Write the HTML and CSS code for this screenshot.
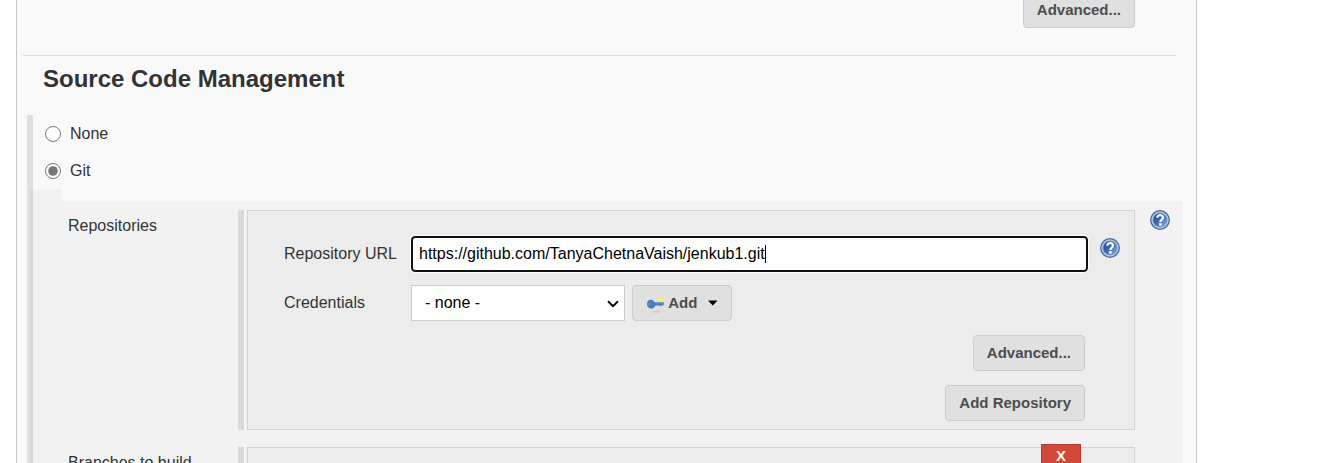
FILE: index.html
```html
<!DOCTYPE html>
<html lang="en">
<head>
<meta charset="utf-8">
<title>Source Code Management</title>
<link rel="stylesheet" href="styles.css">
</head>
<body>
<svg class="defs" aria-hidden="true">
  <defs>
    <linearGradient id="orb" x1="0" y1="0" x2="1" y2="1">
      <stop offset="0" stop-color="#16438c"/>
      <stop offset="0.45" stop-color="#3a66a8"/>
      <stop offset="1" stop-color="#8fb0da"/>
    </linearGradient>
    <symbol id="help" viewBox="0 0 20 20">
      <circle cx="10" cy="10" r="9.3" fill="#b4c8e4" stroke="#46699f" stroke-width="1.3"/>
      <circle cx="10" cy="10" r="6.9" fill="url(#orb)" stroke="#6d8dbd" stroke-width="0.6"/>
      <path d="M7.2 7.8C7.1 4.2 13.1 4.2 13 7.6C13 9.6 10.4 9.5 10.4 11.9" fill="none" stroke="#fff" stroke-width="2.2"/>
      <rect x="9.1" y="13.2" width="2.5" height="2.4" fill="#fff"/>
    </symbol>
  </defs>
</svg>
<main class="panel">
  <div class="top-actions"><button class="btn" type="button">Advanced...</button></div>
  <h2 class="heading">Source Code Management</h2>
  <section class="scm">
    <label class="choice"><input type="radio" name="scm">None</label>
    <label class="choice"><input type="radio" name="scm" checked>Git</label>
    <div class="git">
      <div class="git-tab"></div>
      <div class="git-body">
        <div class="setting">
          <div class="setting-name">Repositories</div>
          <div class="rail">
            <div class="box">
              <div class="field">
                <label for="url">Repository URL</label>
                <div class="url-wrap"><input class="url" id="url" type="text" value="https://github.com/TanyaChetnaVaish/jenkub1.git"><span class="caret"></span></div>
                <a class="help" href="#" aria-label="Help for Repository URL"><svg><use href="#help"/></svg></a>
              </div>
              <div class="field">
                <label for="cred">Credentials</label>
                <div class="cred">
                  <div class="select-wrap">
                    <select id="cred"><option>- none -</option></select>
                    <svg class="chevron" viewBox="0 0 12 8"><path d="M1 1.2L6 6.2L11 1.2" fill="none" stroke="#000" stroke-width="2"/></svg>
                  </div>
                  <button class="btn add" type="button">
                    <svg class="key" viewBox="0 0 18 18">
                      <ellipse cx="10" cy="16" rx="5.5" ry="0.8" fill="#cbcbcb"/>
                      <circle cx="14.5" cy="3" r="2.8" fill="#f3ea7c"/>
                      <path d="M14.5 0.5L15.4 2.3L17.4 3.2L15.4 4.1L14.5 6L13.6 4.1L11.6 3.2L13.6 2.3Z" fill="#fff64a"/>
                      <path d="M8 6H17.5V8.4L16.5 9.8L15 9.2L14 10.6L12.6 9.6H8.6C8 12.4 5.8 13 4 12.7C1.2 12.3 0 10.7 0 8C0 5 1.6 3.5 4 3.5C6 3.5 7.4 4.5 8 6Z" fill="#4b80bd"/>
                      <path d="M8 6.8H17" stroke="#6a99cf" stroke-width="1"/>
                      <circle cx="2.4" cy="8" r="0.9" fill="#8095ae"/>
                    </svg>
                    <span>Add</span>
                    <svg class="drop" viewBox="0 0 10 6"><path d="M0 0.5H10L5 5.5Z" fill="#000"/></svg>
                  </button>
                </div>
              </div>
              <div class="actions"><button class="btn" type="button">Advanced...</button></div>
              <div class="actions"><button class="btn" type="button">Add Repository</button></div>
            </div>
          </div>
          <a class="help" href="#" aria-label="Help for Repositories"><svg><use href="#help"/></svg></a>
        </div>
        <div class="setting">
          <div class="setting-name">Branches to build</div>
          <div class="rail">
            <div class="box branches"><button class="remove" type="button">X</button></div>
          </div>
        </div>
      </div>
    </div>
  </section>
</main>
</body>
</html>
```
FILE: styles.css
```css
* { box-sizing: border-box; }

body {
  margin: 0;
  height: 100vh;
  overflow: hidden;
  background: #fff;
  color: #333;
  font: 16px/20px "Liberation Sans", Arial, sans-serif;
}

.defs { position: absolute; width: 0; height: 0; }

.panel {
  margin: -8px 125px 0 16px;
  background: #f9f9f9;
  border: solid #c8c8c8;
  border-width: 0 1px;
}

.btn {
  height: 36px;
  padding: 0 13px;
  border: 1px solid #ccc;
  border-radius: 4px;
  background: #e0e0e0;
  color: #4d4d4d;
  font: bold 15px/20px "Liberation Sans", Arial, sans-serif;
}

.top-actions {
  display: flex;
  justify-content: flex-end;
  padding-right: 61px;
}

.heading {
  margin: 27px 20px 0 6px;
  padding: 7px 0 0 20px;
  height: 60px;
  border-top: 1px solid #dcdcdc;
  font-size: 24px;
  line-height: 32px;
}

.scm {
  margin: 0 13px 0 10px;
  border-left: 6px solid #dfdfdf;
}

.choice {
  display: flex;
  align-items: center;
  gap: 9px;
  height: 37px;
  padding-left: 12px;
}

.choice input { width: 16px; height: 16px; margin: 0; accent-color: #767676; }

.git { margin-left: -3px; }

.git-tab { width: 32px; height: 12px; background: rgba(0, 0, 0, 0.027); }

.git-body {
  display: grid;
  gap: 17px;
  padding: 9px 13px 0 38px;
  background: rgba(0, 0, 0, 0.027);
}

.setting {
  display: grid;
  grid-template-columns: 170px 1fr 20px;
}

.setting-name { padding-top: 6px; }

.rail {
  margin-right: 15px;
  padding-left: 3px;
  border-left: 6px solid #d9d9d9;
}

.box {
  display: grid;
  gap: 14px;
  padding: 25px 14px 8px 36px;
  border: 1px solid #d3d3d3;
  background: #ececec;
}

.field {
  display: grid;
  grid-template-columns: 127px 1fr 20px;
  align-items: center;
}

.field + .field { margin-top: -1px; }

.url-wrap { position: relative; margin-right: 12px; }

.url {
  display: block;
  width: 100%;
  height: 36px;
  padding: 0 6px;
  border: 2px solid #101010;
  border-radius: 4px;
  outline: 1px solid #fff;
  background: #fff;
  color: #000;
  font: inherit;
}

.caret {
  position: absolute;
  top: 9px;
  left: 354px;
  width: 1px;
  height: 18px;
  background: #000;
}

.help { display: block; width: 20px; height: 20px; }
.help svg { display: block; width: 20px; height: 20px; }
.field .help { align-self: start; margin-top: 2px; }

.cred { display: flex; gap: 7px; }

.select-wrap { position: relative; width: 214px; }

select {
  appearance: none;
  width: 100%;
  height: 36px;
  padding: 0 13px;
  border: 1px solid #ccc;
  border-radius: 0;
  background: #fff;
  color: #000;
  font: inherit;
}

.chevron {
  position: absolute;
  top: 15px;
  right: 6px;
  width: 12px;
  height: 8px;
  pointer-events: none;
}

.add { display: flex; align-items: center; width: 100px; padding-left: 14px; }
.key { width: 18px; height: 18px; margin: 3px 4px 0 0; }
.drop { width: 10px; height: 6px; margin-left: 11px; }

.actions {
  display: flex;
  justify-content: flex-end;
  padding-right: 35px;
}

.branches { position: relative; height: 120px; }

.remove {
  position: absolute;
  top: -4px;
  right: 53px;
  width: 40px;
  height: 24px;
  padding: 0;
  border: 1px solid #b83a2c;
  background: #d24939;
  color: #f5f5f5;
  font: bold 15px/20px "Liberation Sans", Arial, sans-serif;
}
```
